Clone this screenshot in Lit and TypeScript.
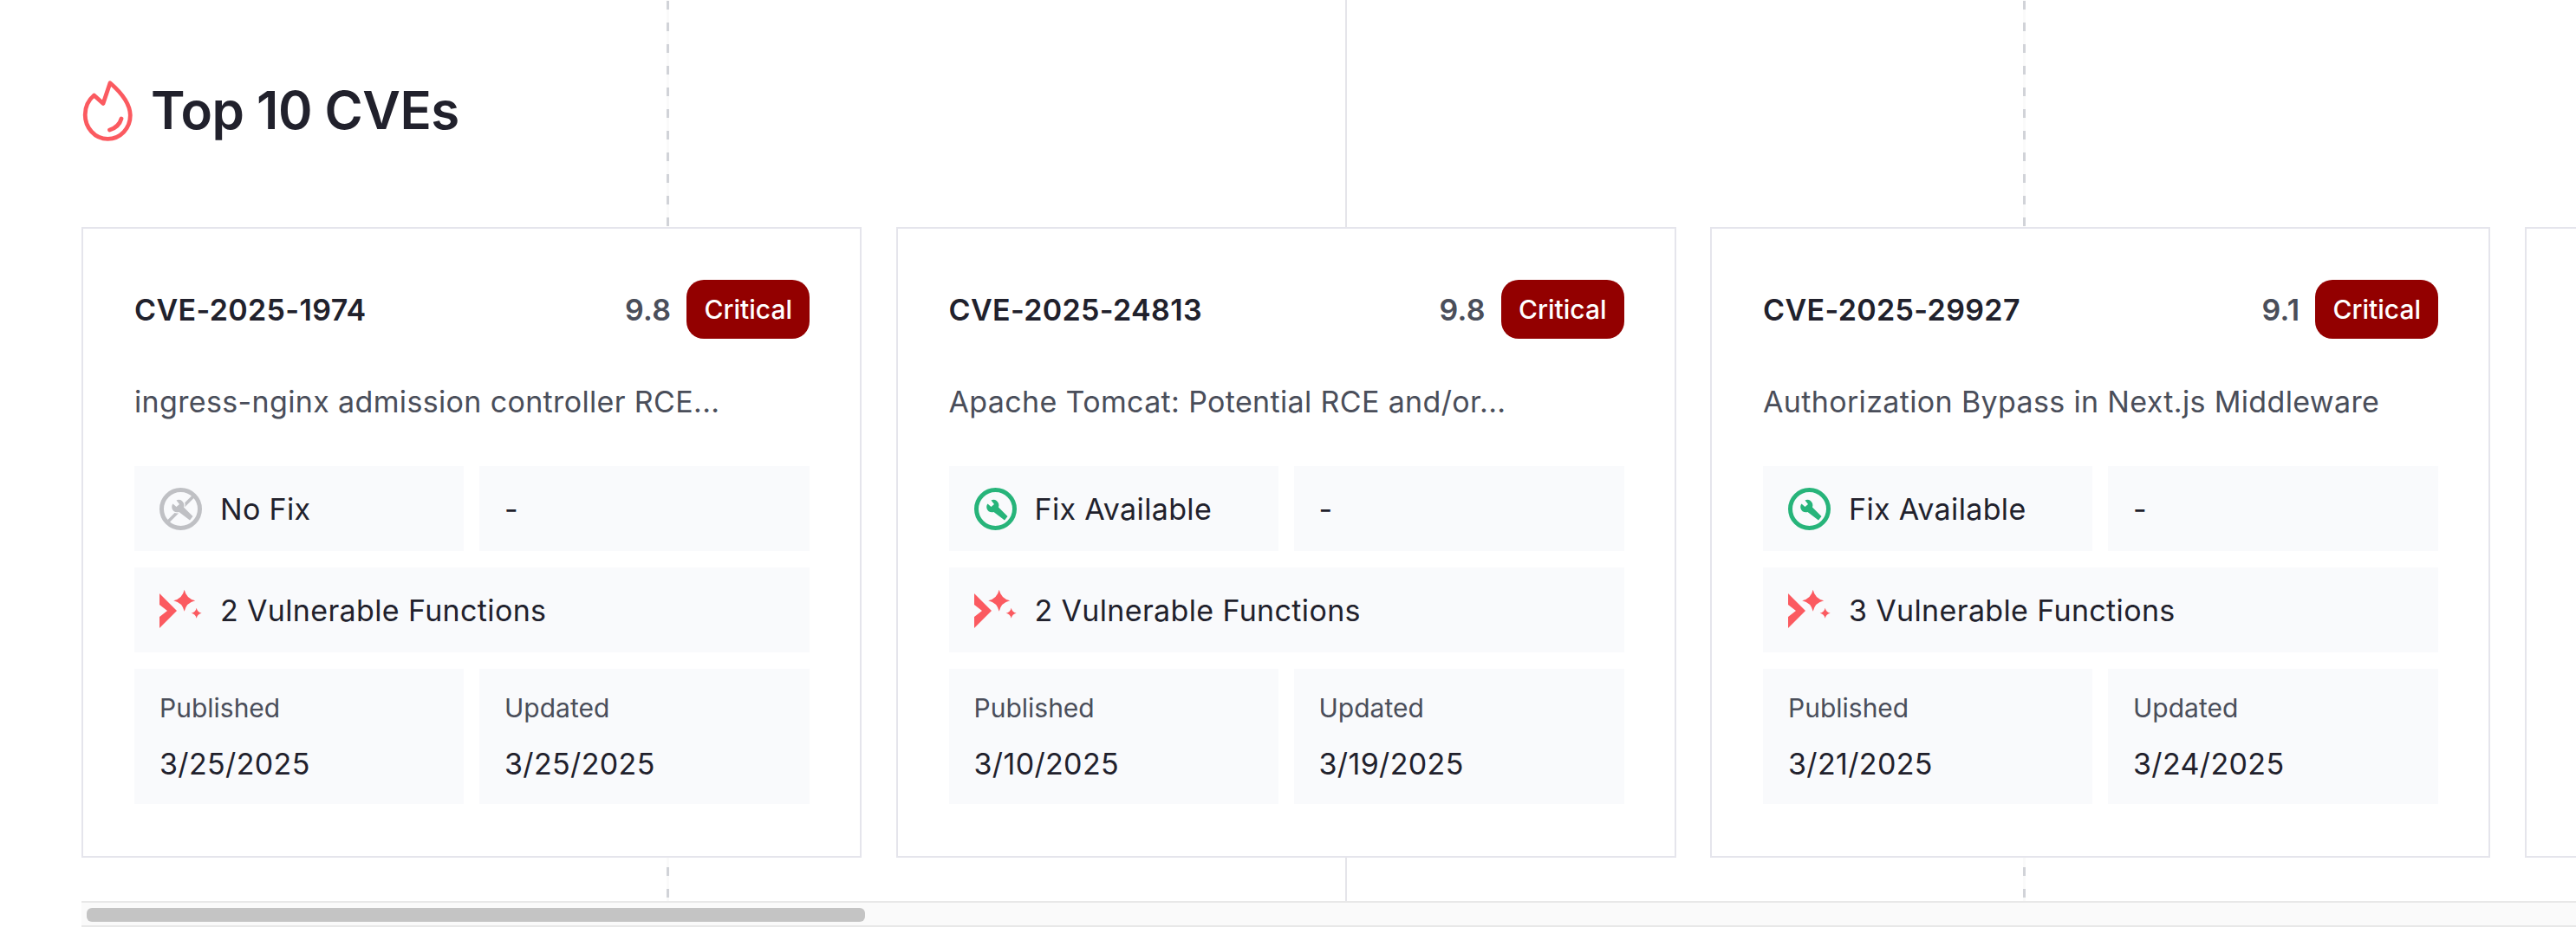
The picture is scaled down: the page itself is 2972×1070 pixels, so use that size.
import { LitElement, html, css, svg } from 'lit';
import { customElement } from 'lit/decorators.js';

interface Cve {
    id: string;
    score: string;
    title: string;
    fix: boolean;
    functions: number;
    published: string;
    updated: string;
}

const CVES: Cve[] = [
    { id: 'CVE-2025-1974', score: '9.8', title: 'ingress-nginx admission controller RCE...', fix: false, functions: 2, published: '3/25/2025', updated: '3/25/2025' },
    { id: 'CVE-2025-24813', score: '9.8', title: 'Apache Tomcat: Potential RCE and/or...', fix: true, functions: 2, published: '3/10/2025', updated: '3/19/2025' },
    { id: 'CVE-2025-29927', score: '9.1', title: 'Authorization Bypass in Next.js Middleware', fix: true, functions: 3, published: '3/21/2025', updated: '3/24/2025' },
];

const WRENCH = 'M43.5 38.5L40 43L27.5 33.5C24 34.5 20.5 33 19.5 29.5C19 27.5 19.2 25.5 20.5 24L24.5 27.5L28 24.5L24.5 20C26.5 19 28.8 19 30.8 20.5C33.3 22.5 34 25.5 33 28Z';

const flameIcon = html`<svg class="flame" viewBox="24 33 59 71" width="59" height="71" fill="none" stroke="#fb5a60" stroke-width="4.8" stroke-linecap="round" stroke-linejoin="round">
    <path d="M57 35.7C69 46 80 58 80.3 73C80.3 88 69 100.3 54.3 100.3C39 100.3 28.2 87 28.2 72.5C28.2 63 32 55.5 38.5 50L49 59.5Z" />
    <path d="M70 77C68 84 63 88 56.5 90" />
</svg>`;

const fixIcon = html`<svg viewBox="5 5.5 49 49" width="49" height="49">
    <circle cx="29.5" cy="30" r="22" fill="none" stroke="#27b47a" stroke-width="5" />
    <path d=${WRENCH} fill="#27b47a" />
</svg>`;

const noFixIcon = html`<svg viewBox="5 5.5 49 49" width="49" height="49">
    <circle cx="29.5" cy="30" r="22" fill="none" stroke="#bfc0c4" stroke-width="5" />
    <path d="M44 15.5L15 44.5" fill="none" stroke="#bfc0c4" stroke-width="3.6" />
    <path d=${WRENCH} fill="#bfc0c4" stroke="#f9fafc" stroke-width="2.4" paint-order="stroke" />
</svg>`;

const star = (x: number, y: number, r: number) =>
    svg`<path d="M${x} ${y - r}Q${x + r * 0.18} ${y - r * 0.18} ${x + r} ${y}Q${x + r * 0.18} ${y + r * 0.18} ${x} ${y + r}Q${x - r * 0.18} ${y + r * 0.18} ${x - r} ${y}Q${x - r * 0.18} ${y - r * 0.18} ${x} ${y - r}Z" />`;

const sparkIcon = html`<svg viewBox="9 10 49 49" width="49" height="49" fill="#fb5a60">
    <path d="M9 15L29 35L9 55V42L18 35L9 28Z" />
    ${star(37.7, 23.3, 12.5)}
    ${star(51.7, 37.7, 6)}
</svg>`;

@customElement('app-root')
export class AppRoot extends LitElement {
    static override styles = css`
        :host {
            display: block;
            position: relative;
            height: 1070px;
            overflow: hidden;
            background: #fff;
            font-family: Inter, "Liberation Sans", sans-serif;
            color: #21212c;
        }

        /* background guides behind the content */
        .guide {
            position: absolute;
            top: 0;
            bottom: 0;
        }

        .guide.dashed {
            width: 3px;
            background: repeating-linear-gradient(
                to bottom,
                #fafafa 0 1px,
                #d1d3d8 1px 11px,
                #fafafa 11px 25px
            );
        }

        .guide.solid {
            left: 1552px;
            width: 2px;
            background: #e5e5ea;
        }

        .guide.g1 { left: 769px; }
        .guide.g3 { left: 2334px; }

        main {
            position: relative;
            padding: 92px 0 0 94px;
        }

        h1 {
            display: flex;
            align-items: center;
            gap: 21px;
            height: 71px;
            margin: 0 0 99px;
            font-size: 60px;
            font-weight: 600;
            line-height: 71px;
            letter-spacing: -0.5px;
            color: #21212c;
        }

        .flame {
            flex: none;
            margin-top: 1px;
        }

        .cards {
            display: flex;
            gap: 39.5px;
            height: 728px;
            overflow: hidden;
        }

        .card {
            flex: none;
            box-sizing: border-box;
            width: 900px;
            padding: 59px 58px 59px 59px;
            border: 2px solid #e5e5ec;
            background: #fff;
            letter-spacing: 0.35px;
        }

        .head {
            display: flex;
            align-items: center;
            height: 68px;
            margin-bottom: 49px;
        }

        .id {
            flex: 1;
            font-size: 34px;
            font-weight: 600;
        }

        .score {
            margin-right: 18px;
            font-size: 34px;
            font-weight: 600;
            color: #4a4e5a;
        }

        .badge {
            padding: 0 20px;
            font-size: 30px;
            font-weight: 500;
            line-height: 68px;
            letter-spacing: 0;
            color: #fff;
            background: #930000;
            border-radius: 20px;
        }

        .desc {
            margin-bottom: 50px;
            font-size: 34px;
            line-height: 48px;
            color: #4a4e5a;
            white-space: nowrap;
        }

        .facts {
            display: grid;
            grid-template-columns: 380px 381px;
            grid-template-rows: 98px 98px 156px;
            gap: 19px 18px;
        }

        .cell {
            display: flex;
            align-items: center;
            gap: 21px;
            padding-left: 29px;
            font-size: 34px;
            background: #f9fafc;
        }

        .cell svg {
            flex: none;
        }

        .wide {
            grid-column: span 2;
        }

        .date {
            flex-direction: column;
            align-items: flex-start;
            gap: 21px;
            padding-top: 25px;
        }

        .date span {
            font-size: 30px;
            line-height: 40px;
            letter-spacing: 0;
            color: #4a4e5a;
        }

        .date b {
            font-weight: 400;
            line-height: 48px;
        }

        .bar {
            box-sizing: border-box;
            height: 30px;
            margin-top: 50px;
            padding: 6px 0 0 6px;
            background: #fafafa;
            border-top: 2px solid #e8e8e8;
            border-bottom: 2px solid #e8e8e8;
        }

        .thumb {
            width: 898px;
            height: 16px;
            background: #c4c4c4;
            border-radius: 6px;
        }
    `;

    private renderCard(cve: Cve) {
        return html`
            <article class="card">
                <div class="head">
                    <div class="id">${cve.id}</div>
                    <div class="score">${cve.score}</div>
                    <div class="badge">Critical</div>
                </div>
                <div class="desc">${cve.title}</div>
                <div class="facts">
                    <div class="cell">${cve.fix ? fixIcon : noFixIcon}${cve.fix ? 'Fix Available' : 'No Fix'}</div>
                    <div class="cell">-</div>
                    <div class="cell wide">${sparkIcon}${cve.functions} Vulnerable Functions</div>
                    <div class="cell date"><span>Published</span><b>${cve.published}</b></div>
                    <div class="cell date"><span>Updated</span><b>${cve.updated}</b></div>
                </div>
            </article>
        `;
    }

    override render() {
        return html`
            <div class="guide dashed g1"></div>
            <div class="guide solid"></div>
            <div class="guide dashed g3"></div>
            <main>
                <h1>${flameIcon}Top 10 CVEs</h1>
                <div class="cards">
                    ${CVES.map((cve) => this.renderCard(cve))}
                    <article class="card"></article>
                </div>
                <div class="bar"><div class="thumb"></div></div>
            </main>
        `;
    }
}
